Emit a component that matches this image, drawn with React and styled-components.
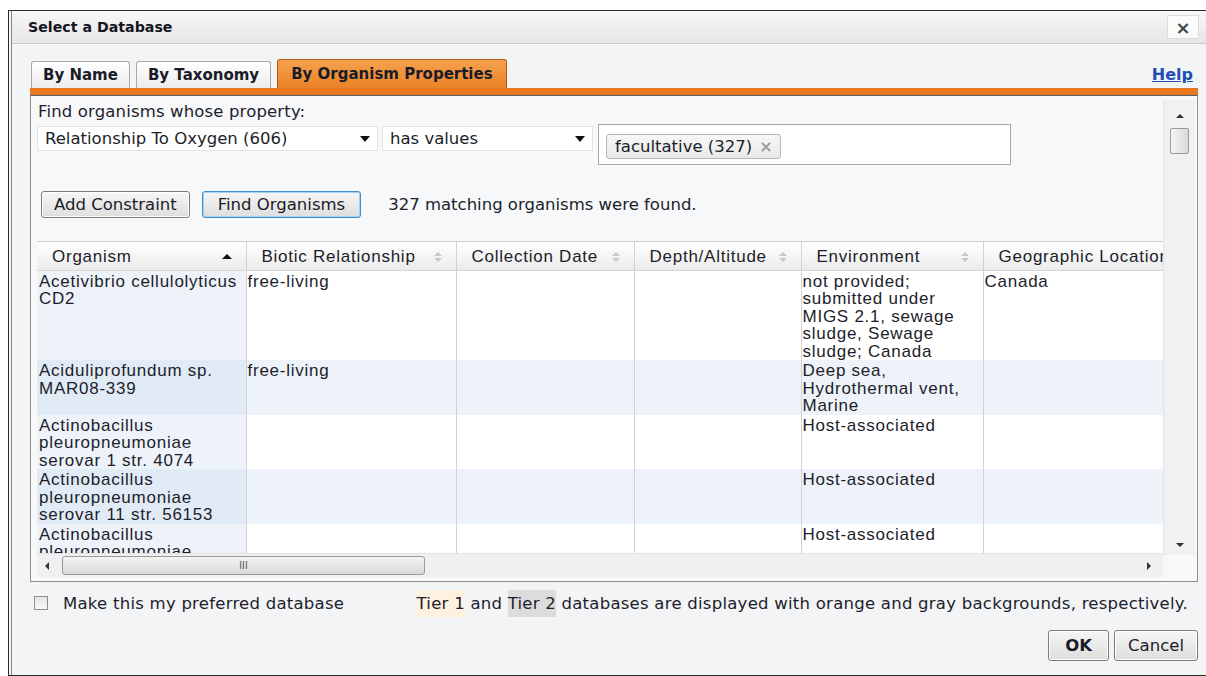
import React from "react";
import styled, { createGlobalStyle } from "styled-components";

const GlobalStyle = createGlobalStyle`
  html, body {
    margin: 0;
    padding: 0;
    background: #ffffff;
    overflow: hidden;
  }
  body {
    font-family: "DejaVu Sans", sans-serif;
    color: #1d1d2b;
  }
`;

const ui = `"DejaVu Sans", "Liberation Sans", sans-serif`;
const grid = `"Liberation Sans", Arial, sans-serif`;

const columns = [
  { key: "organism", title: "Organism", width: 209, sort: "asc" },
  { key: "biotic", title: "Biotic Relationship", width: 210 },
  { key: "date", title: "Collection Date", width: 178 },
  { key: "depth", title: "Depth/Altitude", width: 167 },
  { key: "env", title: "Environment", width: 182 },
  { key: "geo", title: "Geographic Location", width: 230, last: true },
];

const rows = [
  {
    organism: "Acetivibrio cellulolyticus CD2",
    biotic: "free-living",
    env: "not provided; submitted under MIGS 2.1, sewage sludge, Sewage sludge; Canada",
    geo: "Canada",
    height: 90,
  },
  {
    organism: "Aciduliprofundum sp. MAR08-339",
    biotic: "free-living",
    env: "Deep sea, Hydrothermal vent, Marine",
    height: 54,
  },
  {
    organism: "Actinobacillus pleuropneumoniae serovar 1 str. 4074",
    env: "Host-associated",
    height: 54,
  },
  {
    organism: "Actinobacillus pleuropneumoniae serovar 11 str. 56153",
    env: "Host-associated",
    height: 54,
  },
  {
    organism: "Actinobacillus pleuropneumoniae serovar 2 str. 4226",
    env: "Host-associated",
    height: 54,
  },
];

const Page = styled.div`
  padding: 10px 0 0 8px;
  height: 676px;
  box-sizing: border-box;
`;

const Dialog = styled.div`
  width: 1210px;
  height: 666px;
  box-sizing: border-box;
  border: 1px solid #2a2a2a;
  border-right: none;
  padding-left: 2px;
  background: #f2f4f6;
`;

const Inner = styled.div`
  height: 100%;
  border-left: 1px solid #8a8a8a;
  display: flex;
  flex-direction: column;
`;

const TitleBar = styled.div`
  height: 32px;
  display: flex;
  align-items: center;
  justify-content: space-between;
  padding: 0 0 0 16px;
  background: linear-gradient(#f7f7f7, #e6e6e6);
  border-bottom: 1px solid #c9c9c9;
  font-family: ${ui};
  font-weight: bold;
  font-size: 14.2px;
  color: #151520;
`;

const CloseButton = styled.div`
  width: 30px;
  height: 22px;
  margin-right: 19px;
  background: #fbfbfb;
  border: 1px solid #dcdcdc;
  display: flex;
  align-items: center;
  justify-content: center;
  font-size: 18px;
  color: #444;
  font-weight: bold;
`;

const Body = styled.div`
  flex: 1;
  display: flex;
  flex-direction: column;
  padding: 16px 20px 0 18px;
`;

const TabRow = styled.div`
  display: flex;
  align-items: flex-end;
  gap: 6px;
  height: 28px;
  padding-left: 1px;
`;

const Tab = styled.div`
  height: ${(p) => (p.$active ? 29 : 27)}px;
  box-sizing: border-box;
  padding: 0 ${(p) => (p.$active ? 13 : 11)}px;
  display: flex;
  align-items: center;
  border: 1px solid ${(p) => (p.$active ? "#b45a14" : "#a9a9a9")};
  border-bottom: none;
  border-radius: 3px 3px 0 0;
  background: ${(p) =>
    p.$active
      ? "linear-gradient(#f6a14e, #ea8328)"
      : "linear-gradient(#ffffff, #ececec)"};
  font-family: ${ui};
  font-weight: bold;
  font-size: 15px;
  color: #1b1b28;
`;

const Help = styled.a`
  margin-left: auto;
  align-self: center;
  margin-right: 5px;
  color: #1f4fb4;
  font-family: ${ui};
  font-weight: bold;
  font-size: 16px;
  text-decoration: underline;
`;

const Panel = styled.div`
  border-top: 7px solid #e8781f;
  display: flex;
  flex-direction: column;
`;

const PanelBox = styled.div`
  height: 487px;
  box-sizing: border-box;
  border: 1px solid #8f8f8f;
  border-top: 1px solid #55606a;
  background: #f6f8f9;
  display: flex;
`;

const Content = styled.div`
  width: 1126px;
  padding: 7px 0 0 6px;
  display: flex;
  flex-direction: column;
`;

const Label = styled.div`
  font-family: ${ui};
  font-size: 16.5px;
  letter-spacing: 0.15px;
  height: 18px;
  line-height: 18px;
  padding-left: 1px;
`;

const QueryRow = styled.div`
  display: flex;
  align-items: flex-start;
  gap: 4px;
  margin-top: 3px;
`;

const Select = styled.div`
  width: ${(p) => p.$w}px;
  height: 25px;
  box-sizing: border-box;
  margin-top: 2px;
  background: #ffffff;
  border: 1px solid #e0e4e8;
  display: flex;
  align-items: center;
  justify-content: space-between;
  padding: 0 7px 0 7px;
  font-family: ${ui};
  font-size: 16.5px;
`;

const Caret = styled.span`
  width: 0;
  height: 0;
  border-left: 5px solid transparent;
  border-right: 5px solid transparent;
  border-top: 6px solid #111;
`;

const ValueBox = styled.div`
  width: 413px;
  height: 41px;
  box-sizing: border-box;
  margin-left: 1px;
  background: #ffffff;
  border: 1px solid #a6a6a6;
  padding: 9px 0 0 7px;
`;

const Token = styled.span`
  display: inline-flex;
  align-items: center;
  gap: 7px;
  height: 25px;
  box-sizing: border-box;
  padding: 0 7px 0 8px;
  border: 1px solid #b7b7b7;
  border-radius: 3px;
  background: linear-gradient(#f7f7f7, #e9e9e9);
  font-family: ${ui};
  font-size: 16.5px;
`;

const TokenX = styled.span`
  color: #9a9a9a;
  font-weight: bold;
  font-size: 16px;
`;

const ActionRow = styled.div`
  display: flex;
  align-items: center;
  gap: 12px;
  margin-top: 26px;
  padding-left: 4px;
`;

const Button = styled.div`
  height: ${(p) => p.$h || 27}px;
  box-sizing: border-box;
  padding: 0 ${(p) => p.$px || 14}px;
  display: flex;
  align-items: center;
  border: 1px solid ${(p) => (p.$focus ? "#3c8fd2" : "#7c7c7c")};
  box-shadow: ${(p) => (p.$focus ? "inset 0 0 0 1px #a5d2f2" : "inset 0 0 0 1px #ffffff")};
  border-radius: 3px;
  background: linear-gradient(#f6f6f6, #dedede);
  font-family: ${ui};
  font-size: 16.5px;
  font-weight: ${(p) => (p.$bold ? "bold" : "normal")};
  color: #1b1b28;
`;

const Found = styled.span`
  margin-left: 15px;
  font-family: ${ui};
  font-size: 16.5px;
`;

const GridWrap = styled.div`
  margin-top: 23px;
  width: 1126px;
  border-top: 1px solid #d0d0d0;
  overflow: hidden;
  flex: 1;
  display: flex;
  flex-direction: column;
`;

const Table = styled.table`
  border-collapse: collapse;
  table-layout: fixed;
  width: 1176px;
  flex-shrink: 0;
  font-family: ${grid};
  font-size: 17px;
  letter-spacing: 0.75px;
  color: #1d1d2b;
`;

const Th = styled.th`
  height: 28px;
  padding: 2px 0 0 15px;
  box-sizing: border-box;
  text-align: left;
  font-weight: normal;
  white-space: nowrap;
  overflow: hidden;
  background: linear-gradient(#ffffff, #ebebeb);
  border-left: 1px solid #d2d2d2;
  border-bottom: 1px solid #d6d6d6;
  &:first-child {
    border-left: none;
  }
`;

const HeadInner = styled.div`
  display: flex;
  align-items: center;
  justify-content: space-between;
  padding-right: 14px;
`;

const SortBoth = styled.span`
  display: inline-flex;
  flex-direction: column;
  gap: 2px;
  &::before,
  &::after {
    content: "";
    width: 0;
    height: 0;
    border-left: 4px solid transparent;
    border-right: 4px solid transparent;
  }
  &::before {
    border-bottom: 4px solid #c8c8c8;
  }
  &::after {
    border-top: 4px solid #c8c8c8;
  }
`;

const SortUp = styled.span`
  width: 0;
  height: 0;
  border-left: 5px solid transparent;
  border-right: 5px solid transparent;
  border-bottom: 5px solid #111;
`;

const Tr = styled.tr`
  height: ${(p) => p.$h}px;
  background: ${(p) => (p.$odd ? "#edf3f8" : "#ffffff")};
`;

const Td = styled.td`
  vertical-align: top;
  padding: 2px 2px 0 1px;
  line-height: 17.5px;
  border-left: 1px solid #d2d2d2;
  &:first-child {
    border-left: none;
    padding-left: 2px;
    background: ${(p) => (p.$odd ? "#e1ebf5" : "#edf3f9")};
  }
`;

const HScroll = styled.div`
  height: 23px;
  margin-top: auto;
  margin-bottom: 4px;
  background: #eef0f1;
  border-top: 1px solid #e3e3e3;
  display: flex;
  align-items: center;
  padding: 0 12px 0 8px;
  gap: 13px;
`;

const Arrow = styled.span`
  width: 0;
  height: 0;
  border-top: 4px solid transparent;
  border-bottom: 4px solid transparent;
  ${(p) =>
    p.$dir === "left"
      ? "border-right: 4px solid #333;"
      : "border-left: 4px solid #333; margin-left: auto;"}
`;

const HThumb = styled.div`
  width: 363px;
  height: 19px;
  box-sizing: border-box;
  border: 1px solid #9a9a9a;
  border-radius: 3px;
  background: linear-gradient(#f4f4f4, #d8d8d8);
  display: flex;
  align-items: center;
  justify-content: center;
  font-family: ${grid};
  font-size: 10px;
  color: #555;
`;

const VScroll = styled.div`
  width: 32px;
  height: 455px;
  margin-top: 4px;
  box-sizing: border-box;
  background: #f0f1f2;
  border-left: 1px solid #e4e4e4;
  display: flex;
  flex-direction: column;
  align-items: center;
  padding: 14px 0 8px;
`;

const VArrow = styled.span`
  width: 0;
  height: 0;
  border-left: 4px solid transparent;
  border-right: 4px solid transparent;
  ${(p) =>
    p.$dir === "up"
      ? "border-bottom: 4px solid #333;"
      : "border-top: 4px solid #333; margin-top: auto;"}
`;

const VThumb = styled.div`
  margin-top: 10px;
  width: 19px;
  height: 26px;
  box-sizing: border-box;
  border: 1px solid #9a9a9a;
  border-radius: 2px;
  background: linear-gradient(90deg, #f4f4f4, #d9d9d9);
`;

const Footer = styled.div`
  display: flex;
  align-items: center;
  height: 24px;
  margin-top: 9px;
  padding-left: 4px;
  font-family: ${ui};
  font-size: 16.5px;
  letter-spacing: 0.25px;
`;

const Check = styled.span`
  width: 14px;
  height: 14px;
  box-sizing: border-box;
  border: 1px solid #8e8e8e;
  background: linear-gradient(#e4e4e4, #fafafa);
  margin-right: 15px;
`;

const Legend = styled.span`
  margin-left: auto;
  margin-right: 10px;
`;

const Tier = styled.span`
  padding: 4px 0;
  background: ${(p) => (p.$gray ? "#dcdcdc" : "#fdf1e0")};
`;

const Actions = styled.div`
  display: flex;
  justify-content: flex-end;
  gap: 5px;
  margin-top: 15px;
  padding-right: 0;
`;

export default function App() {
  return (
    <>
      <GlobalStyle />
      <Page>
        <Dialog>
          <Inner>
            <TitleBar>
              <span>Select a Database</span>
              <CloseButton>×</CloseButton>
            </TitleBar>
            <Body>
              <TabRow>
                <Tab>By Name</Tab>
                <Tab>By Taxonomy</Tab>
                <Tab $active>By Organism Properties</Tab>
                <Help href="#">Help</Help>
              </TabRow>
              <Panel>
                <PanelBox>
                  <Content>
                    <Label>Find organisms whose property:</Label>
                    <QueryRow>
                      <Select $w={341}>
                        <span>Relationship To Oxygen (606)</span>
                        <Caret />
                      </Select>
                      <Select $w={211}>
                        <span>has values</span>
                        <Caret />
                      </Select>
                      <ValueBox>
                        <Token>
                          facultative (327)
                          <TokenX>×</TokenX>
                        </Token>
                      </ValueBox>
                    </QueryRow>
                    <ActionRow>
                      <Button $px={12}>Add Constraint</Button>
                      <Button $px={15} $focus>
                        Find Organisms
                      </Button>
                      <Found>327 matching organisms were found.</Found>
                    </ActionRow>
                    <GridWrap>
                      <Table>
                        <colgroup>
                          {columns.map((c) => (
                            <col key={c.key} style={{ width: c.width }} />
                          ))}
                        </colgroup>
                        <thead>
                          <tr>
                            {columns.map((c) => (
                              <Th key={c.key}>
                                <HeadInner>
                                  <span>{c.title}</span>
                                  {c.sort === "asc" ? (
                                    <SortUp />
                                  ) : c.last ? null : (
                                    <SortBoth />
                                  )}
                                </HeadInner>
                              </Th>
                            ))}
                          </tr>
                        </thead>
                        <tbody>
                          {rows.map((r, ri) => (
                            <Tr key={ri} $h={r.height} $odd={ri % 2 === 1}>
                              {columns.map((c) => (
                                <Td key={c.key} $odd={ri % 2 === 1}>
                                  {r[c.key] || ""}
                                </Td>
                              ))}
                            </Tr>
                          ))}
                        </tbody>
                      </Table>
                    </GridWrap>
                    <HScroll>
                      <Arrow $dir="left" />
                      <HThumb>III</HThumb>
                      <Arrow $dir="right" />
                    </HScroll>
                  </Content>
                  <VScroll>
                    <VArrow $dir="up" />
                    <VThumb />
                    <VArrow $dir="down" />
                  </VScroll>
                </PanelBox>
              </Panel>
              <Footer>
                <Check />
                <span>Make this my preferred database</span>
                <Legend>
                  <Tier>Tier 1</Tier> and <Tier $gray>Tier 2</Tier> databases are
                  displayed with orange and gray backgrounds, respectively.
                </Legend>
              </Footer>
              <Actions>
                <Button $px={16} $h={31} $bold>
                  OK
                </Button>
                <Button $px={13} $h={31}>
                  Cancel
                </Button>
              </Actions>
            </Body>
          </Inner>
        </Dialog>
      </Page>
    </>
  );
}
